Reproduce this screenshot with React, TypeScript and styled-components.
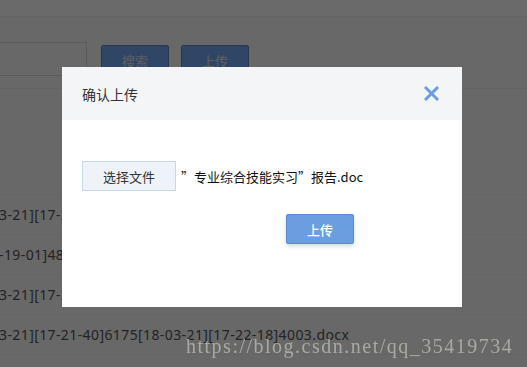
import React from 'react';
import styled, { createGlobalStyle } from 'styled-components';

const GlobalStyle = createGlobalStyle`
  html, body {
    margin: 0;
    padding: 0;
    width: 527px;
    height: 367px;
    overflow: hidden;
    background: #fafafa;
    font-family: "Noto Sans", "Noto Sans CJK SC", sans-serif;
  }
`;

const rows = [
  '3-21][17-21-40]6175[18-03-21][17-22-18]4003.doc',
  '-19-01]4834[18-03-21][17-19-01]4834.docx',
  '3-21][17-21-40]6175[18-03-21][17-22-18]4003.pdf',
  '3-21][17-21-40]6175[18-03-21][17-22-18]4003.docx',
];

const App = () => {
  return (
    <>
      <GlobalStyle />
      <Page>
        <TopBar />
        <Toolbar>
          <SearchInput />
          <ToolButton>搜索</ToolButton>
          <ToolButton $gap={12}>上传</ToolButton>
        </Toolbar>
        <TableHead />
        <Rows>
          {rows.map((r, i) => (
            <Row key={i}>{r}</Row>
          ))}
        </Rows>
      </Page>

      <Overlay>
        <Modal>
          <ModalHeader>
            <ModalTitle>确认上传</ModalTitle>
            <CloseButton>
              <svg width="15" height="15" viewBox="0 0 15 15">
                <path d="M2 2 L13 13 M13 2 L2 13" stroke="#6b9de2" strokeWidth="3" strokeLinecap="square" />
              </svg>
            </CloseButton>
          </ModalHeader>
          <ModalBody>
            <FileRow>
              <ChooseButton>选择文件</ChooseButton>
              <FileName>”专业综合技能实习”报告.doc</FileName>
            </FileRow>
            <SubmitRow>
              <SubmitButton>上传</SubmitButton>
            </SubmitRow>
          </ModalBody>
        </Modal>
      </Overlay>

      <Watermark>https://blog.csdn.net/qq_35419734</Watermark>
    </>
  );
};

const Page = styled.div`
  width: 527px;
  height: 367px;
  display: flex;
  flex-direction: column;
`;

const TopBar = styled.div`
  height: 16px;
  background: #ffffff;
  border-bottom: 1px solid #f0f0f0;
`;

const Toolbar = styled.div`
  display: flex;
  align-items: flex-start;
  padding-top: 25px;
  height: 72px;
  border-bottom: 1px solid #eeeeee;
  box-sizing: border-box;
`;

const SearchInput = styled.div`
  width: 87px;
  height: 34px;
  box-sizing: border-box;
  border: 1px solid #dadada;
  border-left: none;
  background: #fafafa;
`;

const ToolButton = styled.div<{ $gap?: number }>`
  margin-left: ${p => p.$gap ?? 14}px;
  margin-top: 3px;
  width: 68px;
  height: 30px;
  box-sizing: border-box;
  border: 1px solid #5a84c4;
  border-radius: 2px;
  background: #73a8f6;
  color: #e2e6e6;
  font-size: 13px;
  display: flex;
  align-items: center;
  justify-content: center;
`;

const TableHead = styled.div`
  height: 105px;
  border-bottom: 1px solid #f2f2f2;
`;

const Rows = styled.div`
  display: flex;
  flex-direction: column;
`;

const Row = styled.div`
  height: 40px;
  box-sizing: border-box;
  border-bottom: 1px solid #f2f2f2;
  display: flex;
  align-items: center;
  margin-left: -1px;
  color: #555555;
  font-size: 14px;
  letter-spacing: 0.4px;
  white-space: nowrap;
`;

const Overlay = styled.div`
  position: fixed;
  inset: 0;
  background: rgba(0, 0, 0, 0.585);
  padding: 67px 0 0 62px;
  box-sizing: border-box;
`;

const Modal = styled.div`
  width: 400px;
  height: 240px;
  background: #ffffff;
  display: flex;
  flex-direction: column;
`;

const ModalHeader = styled.div`
  height: 53px;
  background: #f4f5f7;
  display: flex;
  align-items: center;
  justify-content: space-between;
  padding: 0 23px 0 20px;
`;

const ModalTitle = styled.div`
  font-size: 14px;
  color: #333333;
`;

const CloseButton = styled.div`
  width: 15px;
  height: 15px;
  display: flex;
`;

const ModalBody = styled.div`
  padding: 41px 20px 0 20px;
  display: flex;
  flex-direction: column;
`;

const FileRow = styled.div`
  display: flex;
  align-items: center;
`;

const ChooseButton = styled.div`
  width: 94px;
  height: 30px;
  box-sizing: border-box;
  border: 1px solid #c4d8ef;
  background: #eef3f9;
  color: #333333;
  font-size: 13px;
  display: flex;
  align-items: center;
  justify-content: center;
`;

const FileName = styled.div`
  margin-left: 5px;
  font-family: "Noto Sans CJK SC", sans-serif;
  font-size: 13px;
  color: #111111;
`;

const SubmitRow = styled.div`
  display: flex;
  padding-left: 204px;
  margin-top: 23px;
`;

const SubmitButton = styled.div`
  width: 68px;
  height: 30px;
  box-sizing: border-box;
  border: 1px solid #5b8bd0;
  border-radius: 2px;
  background: #6b9ee0;
  color: #ffffff;
  font-size: 13px;
  font-weight: 500;
  display: flex;
  align-items: center;
  justify-content: center;
  box-shadow: 0 2px 4px rgba(60, 100, 160, 0.25);
`;

const Watermark = styled.div`
  position: fixed;
  left: 186px;
  top: 335px;
  font-family: "Liberation Serif", "DejaVu Serif", serif;
  font-size: 20px;
  letter-spacing: 1.5px;
  color: #a9a9a3;
  white-space: nowrap;
`;

export default App;
